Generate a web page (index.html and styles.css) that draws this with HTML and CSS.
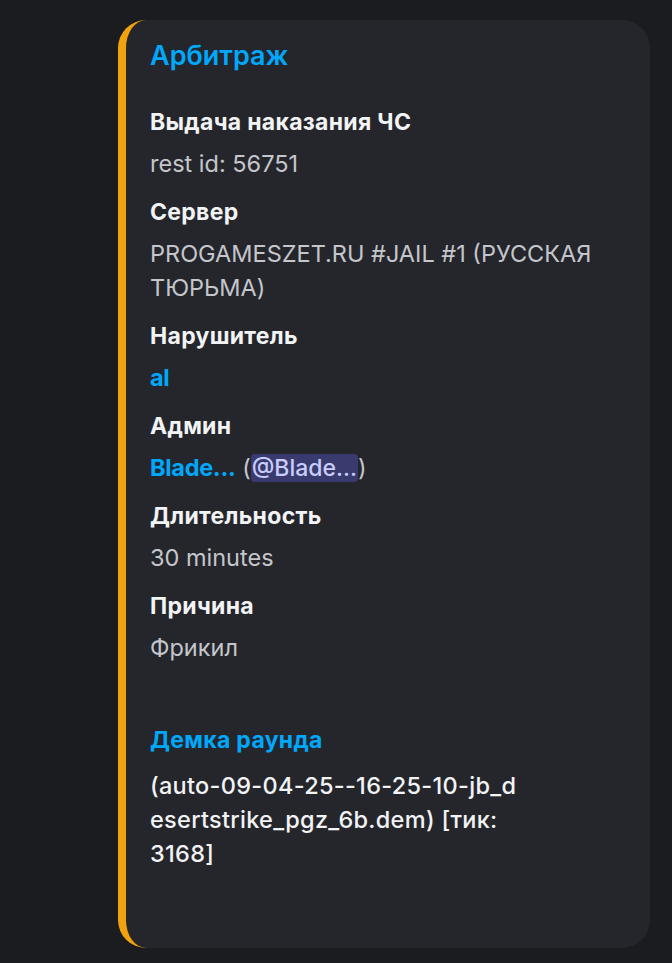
FILE: index.html
```html
<!DOCTYPE html>
<html lang="ru">
<head>
<meta charset="utf-8">
<title>Арбитраж</title>
<link rel="stylesheet" href="styles.css">
</head>
<body>
<article class="embed">
  <h1 class="embed-title">Арбитраж</h1>
  <div class="fields">
    <div class="field">
      <div class="field-name">Выдача наказания ЧС</div>
      <div class="field-value">rest id: 56751</div>
    </div>
    <div class="field">
      <div class="field-name">Сервер</div>
      <div class="field-value">PROGAMESZET.RU #JAIL #1 (РУССКАЯ ТЮРЬМА)</div>
    </div>
    <div class="field">
      <div class="field-name">Нарушитель</div>
      <div class="field-value"><span class="user">al</span></div>
    </div>
    <div class="field">
      <div class="field-name">Админ</div>
      <div class="field-value"><span class="user">Blade...</span> (<span class="mention">@Blade...</span>)</div>
    </div>
    <div class="field">
      <div class="field-name">Длительность</div>
      <div class="field-value">30 minutes</div>
    </div>
    <div class="field">
      <div class="field-name">Причина</div>
      <div class="field-value">Фрикил</div>
    </div>
    <div class="field field-demo">
      <div class="field-name link">Демка раунда</div>
      <div class="field-value strong">(auto-09-04-25--16-25-10-jb_d<br>esertstrike_pgz_6b.dem) [тик:<br>3168]</div>
    </div>
  </div>
</article>
</body>
</html>
```
FILE: styles.css
```css
* { box-sizing: border-box; }
html, body {
  margin: 0;
  padding: 0;
  background: #1b1c20;
  font-family: Inter, "Noto Sans", sans-serif;
}
body {
  padding: 20px 22px 15px 118px;
}
.embed {
  display: flex;
  flex-direction: column;
  width: 532px;
  height: 928px;
  background: #25262b;
  border-left: 8px solid #f0a30e;
  border-radius: 28px;
  padding: 19px 24px 0 24px;
}
.embed-title {
  margin: 0;
  font-size: 27px;
  line-height: 34px;
  font-weight: 600;
  color: #00a8fc;
}
.fields {
  display: flex;
  flex-direction: column;
  gap: 16px;
  margin-top: 34px;
}
.field {
  display: flex;
  flex-direction: column;
  gap: 10px;
}
.field-name {
  font-size: 23px;
  line-height: 30px;
  font-weight: 700;
  letter-spacing: 0.3px;
  color: #f2f3f5;
}
.field-name.link {
  color: #00a8fc;
}
.field-value {
  font-size: 23.5px;
  line-height: 34px;
  color: #c4c6cc;
}
.field-value.strong {
  color: #f2f3f5;
  font-weight: 500;
  letter-spacing: 0.3px;
}
.field-demo {
  margin-top: 44px;
  gap: 14px;
}
.user {
  color: #00a8fc;
  font-weight: 700;
  letter-spacing: -0.3px;
}
.mention {
  background: #393b6e;
  color: #c9cdfb;
  font-weight: 500;
  font-size: 23px;
  border-radius: 4px;
  padding: 0 1px;
}
```
